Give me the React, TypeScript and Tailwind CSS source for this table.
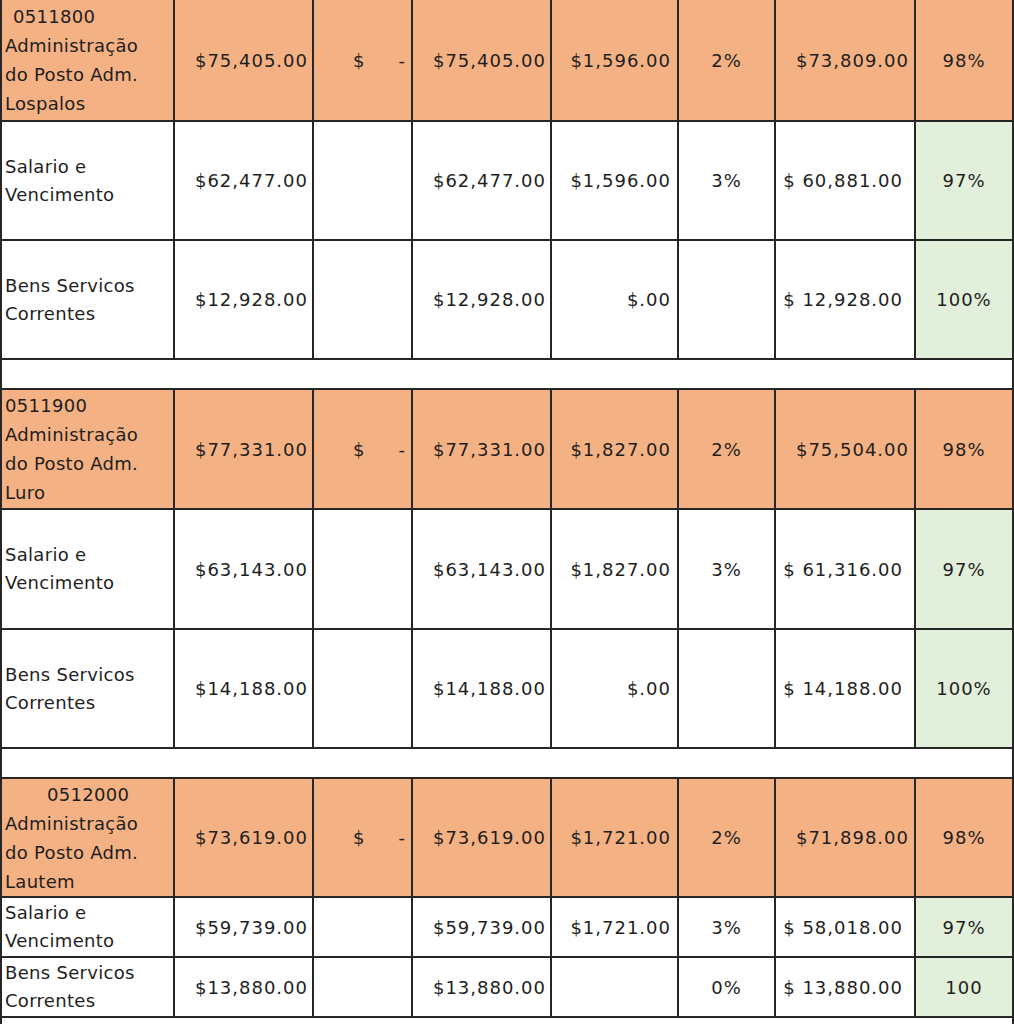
import React from "react";

type Row = {
  label: string[];
  head?: boolean;
  labelPad?: string;
  h: string;
  a: string;
  b: boolean;
  c: string;
  d: string;
  e: string;
  f: string;
  g: string;
};

const groups: Row[][] = [
  [
    {
      label: ["0511800", "Administração", "do Posto Adm.", "Lospalos"],
      head: true,
      labelPad: "pl-[11px]",
      h: "h-[122px]",
      a: "$75,405.00",
      b: true,
      c: "$75,405.00",
      d: "$1,596.00",
      e: "2%",
      f: "$73,809.00",
      g: "98%",
    },
    { label: ["Salario e", "Vencimento"], h: "h-[119px]", a: "$62,477.00", b: false, c: "$62,477.00", d: "$1,596.00", e: "3%", f: "$ 60,881.00", g: "97%" },
    { label: ["Bens Servicos", "Correntes"], h: "h-[119px]", a: "$12,928.00", b: false, c: "$12,928.00", d: "$.00", e: "", f: "$ 12,928.00", g: "100%" },
  ],
  [
    {
      label: ["0511900", "Administração", "do Posto Adm.", "Luro"],
      head: true,
      labelPad: "pl-[3px]",
      h: "h-[120px]",
      a: "$77,331.00",
      b: true,
      c: "$77,331.00",
      d: "$1,827.00",
      e: "2%",
      f: "$75,504.00",
      g: "98%",
    },
    { label: ["Salario e", "Vencimento"], h: "h-[120px]", a: "$63,143.00", b: false, c: "$63,143.00", d: "$1,827.00", e: "3%", f: "$ 61,316.00", g: "97%" },
    { label: ["Bens Servicos", "Correntes"], h: "h-[119px]", a: "$14,188.00", b: false, c: "$14,188.00", d: "$.00", e: "", f: "$ 14,188.00", g: "100%" },
  ],
  [
    {
      label: ["0512000", "Administração", "do Posto Adm.", "Lautem"],
      head: true,
      labelPad: "pl-[45px]",
      h: "h-[119px]",
      a: "$73,619.00",
      b: true,
      c: "$73,619.00",
      d: "$1,721.00",
      e: "2%",
      f: "$71,898.00",
      g: "98%",
    },
    { label: ["Salario e", "Vencimento"], h: "h-[60px]", a: "$59,739.00", b: false, c: "$59,739.00", d: "$1,721.00", e: "3%", f: "$ 58,018.00", g: "97%" },
    { label: ["Bens Servicos", "Correntes"], h: "h-[60px]", a: "$13,880.00", b: false, c: "$13,880.00", d: "", e: "0%", f: "$ 13,880.00", g: "100" },
  ],
];

const cell = "border-2 border-[#262626] align-middle p-0";

function DataRow({ r }: { r: Row }) {
  const bg = r.head ? "bg-[#f4b183]" : "bg-white";
  const lh = r.head ? "leading-[29px]" : "leading-[28px]";
  return (
    <tr className={`${r.h} ${bg}`}>
      <td className={`${cell} pr-1 tracking-[0.3px]`}>
        {r.label.map((l, i) => (
          <div
            key={i}
            className={`${lh} whitespace-nowrap ${i === 0 && r.head ? r.labelPad : "pl-[3px]"}`}
          >
            {l}
          </div>
        ))}
      </td>
      <td className={`${cell} text-right pr-[4px]`}>{r.a}</td>
      <td className={cell}>
        {r.b && (
          <div className="flex justify-between pl-[39px] pr-[5px]">
            <span>$</span>
            <span>-</span>
          </div>
        )}
      </td>
      <td className={`${cell} text-right pr-[4px]`}>{r.c}</td>
      <td className={`${cell} text-right pr-[6px]`}>{r.d}</td>
      <td className={`${cell} text-center`}>{r.e}</td>
      <td className={`${cell} text-right ${r.head ? "pr-[5px]" : "pr-[11px]"}`}>{r.f}</td>
      <td className={`${cell} text-center ${r.head ? "" : "bg-[#e2efda]"}`}>{r.g}</td>
    </tr>
  );
}

export default function App() {
  return (
    <div className="w-[1014px] h-[1024px] overflow-hidden bg-white">
      <table
        className="table-fixed border-collapse w-[1012px] -mt-[2px] text-[18px] tracking-[1px] text-[#1e1e1e]"
        style={{ fontFamily: '"DejaVu Sans", sans-serif' }}
      >
        <colgroup>
          <col className="w-[173px]" />
          <col className="w-[139px]" />
          <col className="w-[99px]" />
          <col className="w-[139px]" />
          <col className="w-[127px]" />
          <col className="w-[97px]" />
          <col className="w-[140px]" />
          <col className="w-[98px]" />
        </colgroup>
        <tbody>
          {groups.map((g, gi) => (
            <React.Fragment key={gi}>
              {g.map((r, ri) => (
                <DataRow key={ri} r={r} />
              ))}
              <tr className="h-[30px] bg-white">
                <td colSpan={8} className={cell}></td>
              </tr>
            </React.Fragment>
          ))}
        </tbody>
      </table>
    </div>
  );
}
